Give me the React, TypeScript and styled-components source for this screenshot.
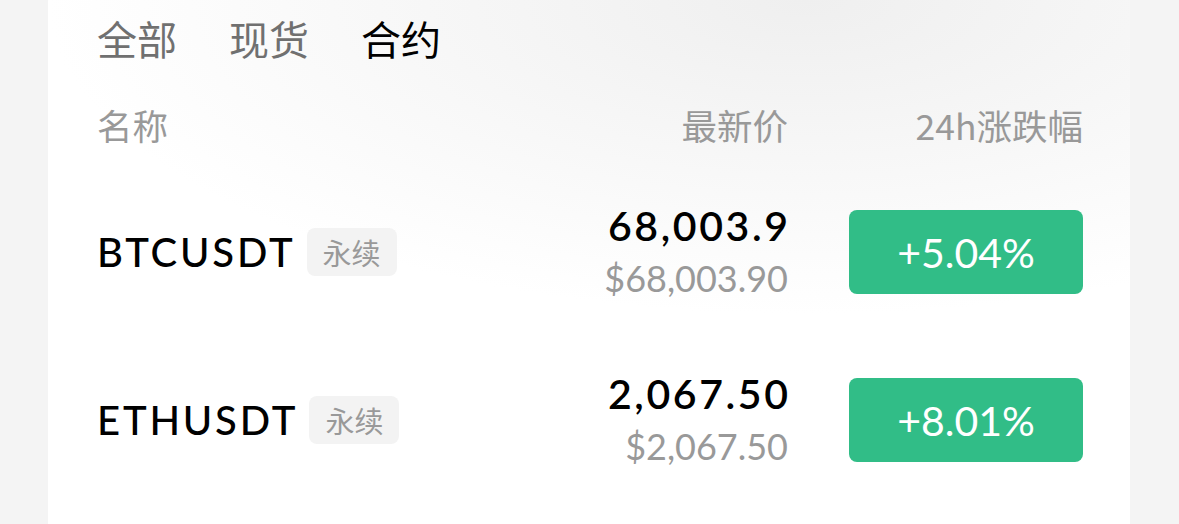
import React from 'react';
import styled, { createGlobalStyle } from 'styled-components';

const GlobalStyle = createGlobalStyle`
  html, body {
    margin: 0;
    padding: 0;
    background: #f4f4f4;
  }
  body {
    font-family: Lato, 'Noto Sans CJK SC', sans-serif;
    -webkit-font-smoothing: antialiased;
  }
`;

const Card = styled.div`
  margin: 0 49px 0 48px;
  height: 524px;
  padding: 0 47px 0 49px;
  box-sizing: border-box;
  background: radial-gradient(ellipse 70% 60% at 70% 0%, #efefef 0%, #ffffff 100%);
  overflow: hidden;
`;

const Tabs = styled.div`
  display: flex;
  gap: 52px;
  height: 76px;
  align-items: center;
`;

const Tab = styled.span<{ $active?: boolean }>`
  font-family: 'Noto Sans CJK SC', sans-serif;
  font-size: 40px;
  line-height: 1;
  color: ${(p) => (p.$active ? '#000' : '#707070')};
`;

const HeaderRow = styled.div`
  display: flex;
  align-items: center;
  height: 92px;
  padding-top: 6px;
  box-sizing: border-box;
  font-family: 'Noto Sans CJK SC', sans-serif;
  font-size: 35.5px;
  line-height: 1;
  color: #999;
`;

const NameCol = styled.div`
  flex: 1;
  display: flex;
  align-items: center;
  gap: 14px;
`;

const PriceCol = styled.div`
  display: flex;
  flex-direction: column;
  align-items: flex-end;
`;

const ChangeCol = styled.div`
  width: 234px;
  margin-left: 61px;
  display: flex;
  justify-content: flex-end;
`;

const Row = styled.div`
  display: flex;
  align-items: center;
  height: 168px;
`;

const Symbol = styled.span`
  font-size: 40px;
  font-weight: 500;
  color: #000;
  letter-spacing: 2.8px;
  margin-right: -2.8px;
`;

const Tag = styled.span`
  display: inline-flex;
  align-items: center;
  justify-content: center;
  width: 90px;
  height: 48px;
  border-radius: 8px;
  background: #f3f3f3;
  color: #999;
  font-family: 'Noto Sans CJK SC', sans-serif;
  font-size: 29px;
`;

const Price = styled.span`
  font-size: 41px;
  font-weight: 600;
  color: #000;
  line-height: 44px;
  letter-spacing: 2.6px;
  margin-right: -2.6px;
`;

const Fiat = styled.span`
  font-size: 36px;
  color: #999;
  line-height: 46px;
  margin-top: 7px;
`;

const Change = styled.div`
  width: 234px;
  height: 84px;
  border-radius: 8px;
  background: #31bd87;
  color: #fff;
  font-size: 41px;
  display: flex;
  align-items: center;
  justify-content: center;
`;

const rows = [
  { symbol: 'BTCUSDT', price: '68,003.9', fiat: '$68,003.90', change: '+5.04%' },
  { symbol: 'ETHUSDT', price: '2,067.50', fiat: '$2,067.50', change: '+8.01%' },
];

const App: React.FC = () => {
  return (
    <>
      <GlobalStyle />
      <Card>
        <Tabs>
          <Tab>全部</Tab>
          <Tab>现货</Tab>
          <Tab $active>合约</Tab>
        </Tabs>
        <HeaderRow>
          <NameCol>名称</NameCol>
          <PriceCol>最新价</PriceCol>
          <ChangeCol>24h涨跌幅</ChangeCol>
        </HeaderRow>
        {rows.map((r) => (
          <Row key={r.symbol}>
            <NameCol>
              <Symbol>{r.symbol}</Symbol>
              <Tag>永续</Tag>
            </NameCol>
            <PriceCol>
              <Price>{r.price}</Price>
              <Fiat>{r.fiat}</Fiat>
            </PriceCol>
            <ChangeCol>
              <Change>{r.change}</Change>
            </ChangeCol>
          </Row>
        ))}
      </Card>
    </>
  );
};

export default App;
